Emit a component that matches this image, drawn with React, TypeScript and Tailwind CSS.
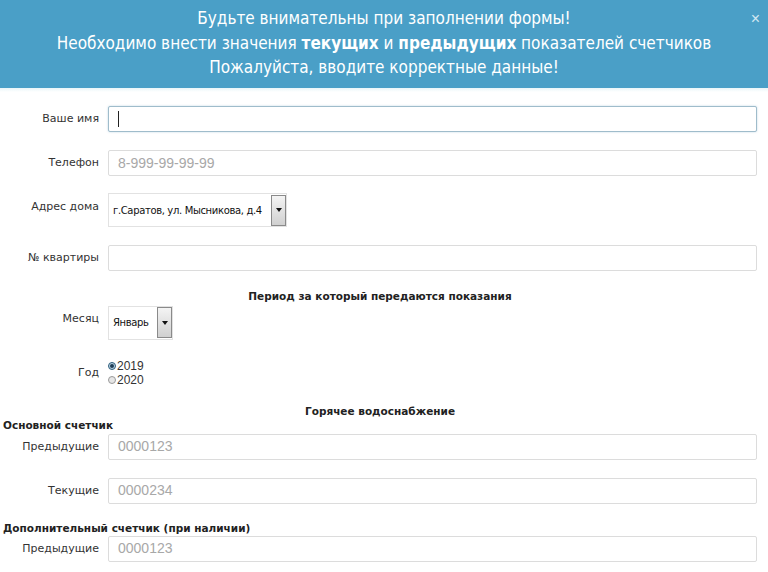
import { FC, ReactNode } from "react";

const labelFont = { fontFamily: '"DejaVu Sans", Tahoma, sans-serif' };

const Row: FC<{
  label: string;
  className?: string;
  labelClass?: string;
  children: ReactNode;
}> = ({ label, className = "", labelClass = "", children }) => (
  <div className={`flex items-center ${className}`}>
    <div
      className={`w-[108px] shrink-0 pr-[9px] text-right text-[11px] text-[#333] ${labelClass}`}
    >
      {label}
    </div>
    {children}
  </div>
);

const TextInput: FC<{ placeholder?: string; focused?: boolean }> = ({
  placeholder,
  focused,
}) => (
  <div
    className={`flex h-[26px] w-[649px] items-center rounded-[2px] border bg-white pl-[9px] font-['Liberation_Sans',Arial,sans-serif] text-[14px] text-[#a8a8a8] ${
      focused
        ? "border-[#9fbccb] shadow-[0_0_2px_rgba(120,170,200,0.5)]"
        : "border-[#dcdcdc]"
    }`}
  >
    {focused ? <span className="h-[16px] w-px bg-[#222]" /> : placeholder}
  </div>
);

const Select: FC<{ value: string; width: string }> = ({ value, width }) => (
  <div
    className={`flex h-[34px] items-center justify-between border border-[#e2e2e2] bg-white pl-[4px] ${width}`}
  >
    <span className="whitespace-nowrap text-[10px] tracking-[-0.35px] text-[#111]">{value}</span>
    <span className="flex h-[31px] w-[15px] shrink-0 items-center justify-center border border-[#8a8a8a] bg-gradient-to-b from-[#f4f4f4] to-[#d0d0d0]">
      <svg width="6" height="4" viewBox="0 0 6 4">
        <path d="M0 0h6L3 4z" fill="#111" />
      </svg>
    </span>
  </div>
);

const Radio: FC<{ checked?: boolean; label: string }> = ({ checked, label }) => (
  <div className="flex h-[14px] items-center">
    <span
      className={`flex h-[8px] w-[8px] items-center justify-center rounded-full border ${
        checked ? "border-[#2d5d7c] bg-[#bcd3e2]" : "border-[#9a9a9a] bg-[#e6e6e6]"
      }`}
    >
      {checked && <span className="h-[4px] w-[4px] rounded-full bg-[#1f3f58]" />}
    </span>
    <span className="ml-[1px] font-['Liberation_Sans',Arial,sans-serif] text-[12px] text-[#333]">
      {label}
    </span>
  </div>
);

const App: FC = () => {
  return (
    <div className="h-[572px] w-[768px] overflow-hidden bg-white" style={labelFont}>
      {/* Header */}
      <div className="relative flex h-[88px] flex-col items-center justify-center bg-[#4a9fc7] pb-[2px] font-['Liberation_Sans_Narrow','DejaVu_Sans_Condensed',sans-serif] text-[17px] leading-[24.5px] text-white">
        <p>Будьте внимательны при заполнении формы!</p>
        <p>
          Необходимо внести значения <b>текущих</b> и <b>предыдущих</b> показателей счетчиков
        </p>
        <p>Пожалуйста, вводите корректные данные!</p>
        <span className="absolute right-[8px] top-[7px] font-['Liberation_Sans',Arial,sans-serif] text-[16px] text-[#d2e8f2]">
          ×
        </span>
      </div>
      <div className="h-[4px] bg-gradient-to-b from-[#e9f5f9] to-white" />

      {/* Form */}
      <Row label="Ваше имя" className="mt-[14px]">
        <TextInput focused />
      </Row>
      <Row label="Телефон" className="mt-[18px]">
        <TextInput placeholder="8-999-99-99-99" />
      </Row>
      <Row label="Адрес дома" className="mt-[17px]" labelClass="pb-[6px]">
        <Select value="г.Саратов, ул. Мысникова, д.4" width="w-[179px]" />
      </Row>
      <Row label="№ квартиры" className="mt-[18px]">
        <TextInput />
      </Row>

      <div className="mt-[18px] pr-[8px] text-center text-[10.5px] font-bold text-[#222]">
        Период за который передаются показания
      </div>
      <Row label="Месяц" className="mt-[1px]" labelClass="pb-[7px]">
        <Select value="Январь" width="w-[65px]" />
      </Row>
      <Row label="Год" className="mt-[19px]">
        <div className="flex flex-col">
          <Radio checked label="2019" />
          <Radio label="2020" />
        </div>
      </Row>

      <div className="mt-[17px] pr-[8px] text-center text-[10.5px] font-bold leading-[14px] text-[#222]">
        Горячее водоснабжение
      </div>
      <div className="pl-[3px] text-[10.5px] font-bold leading-[14px] text-[#222]">
        Основной счетчик
      </div>
      <Row label="Предыдущие" className="mt-[2px]">
        <TextInput placeholder="0000123" />
      </Row>
      <Row label="Текущие" className="mt-[18px]">
        <TextInput placeholder="0000234" />
      </Row>
      <div className="mt-[17px] pl-[3px] text-[10.5px] font-bold leading-[14px] text-[#222]">
        Дополнительный счетчик (при наличии)
      </div>
      <Row label="Предыдущие" className="mt-[1px]">
        <TextInput placeholder="0000123" />
      </Row>
    </div>
  );
};

export default App;
